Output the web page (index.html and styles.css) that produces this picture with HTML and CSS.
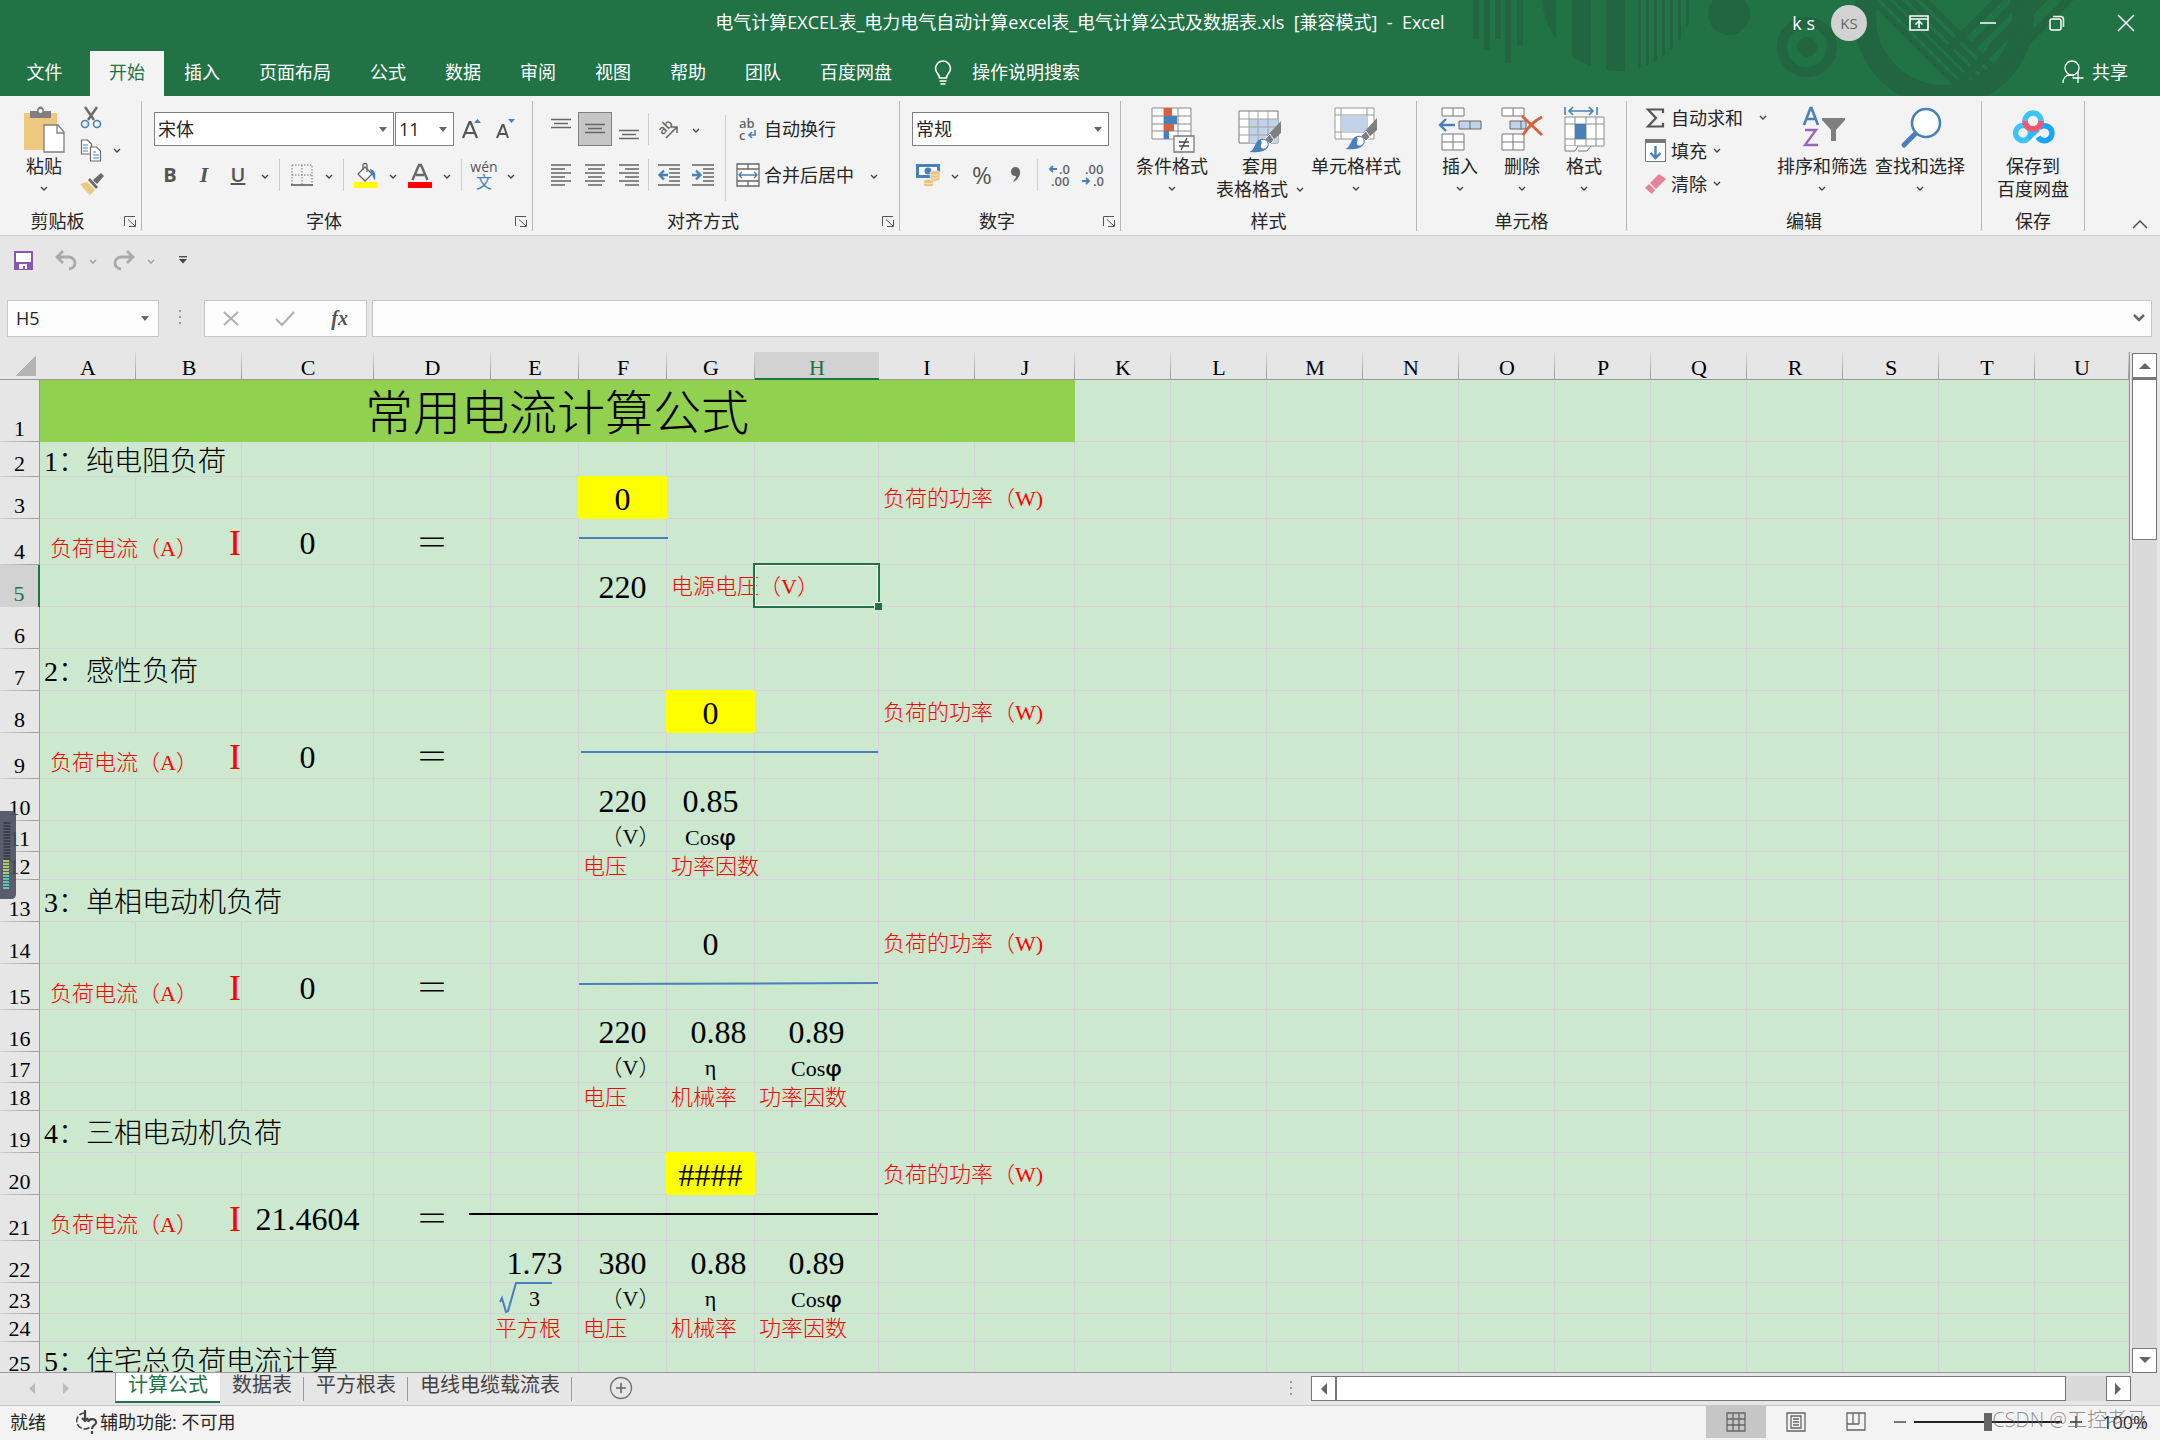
FILE: index.html
```html
<!DOCTYPE html>
<html lang="zh-CN">
<head>
<meta charset="utf-8">
<title>电气计算EXCEL表 - Excel</title>
<link rel="stylesheet" href="styles.css">
</head>
<body>
<svg class="defs" aria-hidden="true">
  <symbol id="chev" viewBox="0 0 8 6"><path d="M1 1l3 3 3-3" fill="none" stroke="#444" stroke-width="1.4"/></symbol>
  <symbol id="launch" viewBox="0 0 12 11"><path d="M.5 10V.5H11M11.500 4v6.500H5M4 3.500l7 6.500" fill="none" stroke="#555"/></symbol>
  <symbol id="brush" viewBox="0 0 44 46"><path d="M43 14v12L34 34l-5-5z" fill="#7f7f7f"/><path d="M32 27l4 6-4 4-5-5z" fill="#7f7f7f" stroke="#f3f3f3"/><path d="M11 45c6-1 5-11 12-13 5-1 9 4 7 8-3 5-12 6-19 5z" fill="#4a80ba"/><path d="M22 33c5-2 9 1 8 6-2 3-5 4-7 2-2-3 2-5-1-8z" fill="#fff" stroke="#4a80ba"/></symbol>
</svg>

<header class="top">
  <svg class="pattern" viewBox="0 0 700 96" width="700" height="96" aria-hidden="true">
    <defs>
      <clipPath id="disc"><circle cx="158" cy="-5" r="76"/></clipPath>
      <clipPath id="hole"><circle cx="484" cy="17" r="68"/></clipPath>
    </defs>
    <g fill="#226541">
      <path d="M13 0h6v39h-6zM24 0h6v50h-6zM35 0h6v39h-6zM45 0h6v63h-6zM57 0h6v46h-6z"/>
      <path clip-path="url(#disc)" d="M80 0h16v80H80zM112 0h19v80h-19zM146 0h19v80h-19zM178 0h3v80h-3zM186 0h3v80h-3zM194 0h3v80h-3zM202 0h3v80h-3zM210 0h3v80h-3zM218 0h3v80h-3zM226 0h3v80h-3z"/>
      <circle cx="269" cy="14" r="21"/><circle cx="347" cy="47" r="10"/>
    </g>
    <g fill="none" stroke="#226541">
      <circle cx="347" cy="47" r="25" stroke-width="10"/>
      <circle cx="484" cy="17" r="79" stroke-width="22"/>
      <path clip-path="url(#hole)" stroke-width="6" d="M400-12l120 120M413-12l120 120M426-12l120 120M439-12l120 120M453-12l120 120"/>
      <path stroke-width="8" d="M489 49l60-60M510 49l60-60M530 49l60-60M498 84l100-100M528 80l95-95"/>
    </g>
  </svg>
  <div class="titlebar">
    <h1 class="title">电气计算EXCEL表_电力电气自动计算excel表_电气计算公式及数据表.xls  [兼容模式]  -  Excel</h1>
    <div class="window">
      <span class="user">k s</span><span class="avatar">KS</span>
      <button class="win" aria-label="功能区显示选项"><svg width="20" height="16" viewBox="0 0 20 16"><path d="M1 1h18v14H1zM1 4h18M10 13V7M6.500 9.500L10 6l3.500 3.500" fill="none" stroke="#fff" stroke-width="1.600"/></svg></button>
      <button class="win" aria-label="最小化"><svg width="16" height="16"><path d="M0 8h16" stroke="#fff" stroke-width="1.500"/></svg></button>
      <button class="win" aria-label="还原"><svg width="16" height="16" viewBox="0 0 16 16"><rect x="1" y="4" width="11" height="11" rx="2" fill="none" stroke="#fff" stroke-width="1.500"/><path d="M4 1.500h7.500a3 3 0 0 1 3 3V12" fill="none" stroke="#fff" stroke-width="1.500"/></svg></button>
      <button class="win" aria-label="关闭"><svg width="16" height="16"><path d="M0 0l16 16M16 0L0 16" stroke="#fff" stroke-width="1.500"/></svg></button>
    </div>
  </div>
  <nav class="tabs">
    <button class="tab file">文件</button>
    <button class="tab active">开始</button>
    <button class="tab">插入</button>
    <button class="tab">页面布局</button>
    <button class="tab">公式</button>
    <button class="tab">数据</button>
    <button class="tab">审阅</button>
    <button class="tab">视图</button>
    <button class="tab">帮助</button>
    <button class="tab">团队</button>
    <button class="tab">百度网盘</button>
    <button class="tell"><svg width="18" height="25" viewBox="0 0 18 25"><path d="M5.500 18c0-4-4-5-4-9.500a7.500 7.500 0 0 1 15 0c0 4.500-4 5.500-4 9.500zM5.500 21h7M6.500 24h5" fill="none" stroke="#fff" stroke-width="1.600"/></svg>操作说明搜索</button>
    <button class="share"><svg width="22" height="24" viewBox="0 0 22 24"><circle cx="10" cy="8" r="7" fill="none" stroke="#fff" stroke-width="1.300"/><path d="M1 23c0-5 3-8 7-8 2 0 3 .4 4 1M16 12v11M10.500 18h11" fill="none" stroke="#fff" stroke-width="1.300"/></svg>共享</button>
  </nav>
</header>

<section class="ribbon">
  <div class="group g-clip">
    <div class="body">
      <button class="big paste"><span class="pic"><svg width="42" height="46" viewBox="0 0 42 46"><path d="M1 6h33v37H1z" fill="#edc87e"/><path d="M7 4h7c0-6 7-6 7 0h7v7H7z" fill="#7f7f7f"/><circle cx="17.500" cy="4" r="2" fill="#f3f3f3"/><path d="M21 18h14l6 7v20H21z" fill="#fff" stroke="#7f7f7f" stroke-width="1.300"/><path d="M34 18v8h7" fill="none" stroke="#7f7f7f" stroke-width="1.300"/></svg></span><span>粘贴</span><svg class="chev"><use href="#chev"/></svg></button>
      <div class="stack">
        <button class="line" aria-label="剪切"><svg width="22" height="22" viewBox="0 0 22 22"><path d="M5 0l9 13M17 0L8 13" stroke="#6b6b6b" stroke-width="2.400"/><circle cx="5" cy="17" r="3.500" fill="none" stroke="#4a80ba" stroke-width="1.600"/><circle cx="17" cy="17" r="3.500" fill="none" stroke="#4a80ba" stroke-width="1.600"/></svg></button>
        <button class="line" aria-label="复制"><svg width="22" height="23" viewBox="0 0 22 23"><path d="M1.500 1h6l4 4v10h-10z" fill="#fff" stroke="#6b6b6b" stroke-width="1.200"/><path d="M10.500 8h6l4 4v10h-10z" fill="#fff" stroke="#6b6b6b" stroke-width="1.200"/><path d="M3 6h5M3 9h5M3 12h5M13 13h3M13 16h6M13 19h6" stroke="#4a80ba" stroke-width="1.200"/></svg><svg class="chev"><use href="#chev"/></svg></button>
        <button class="line" aria-label="格式刷"><svg width="24" height="22" viewBox="0 0 24 22"><path d="M13 7l8-7 3 3-7 8z" fill="#6b6b6b"/><path d="M10 5l8 9-2 2-8-9z" fill="#6b6b6b"/><path d="M7 9l8 8-5 5C7 20 3 14 0 11z" fill="#edc87e"/></svg></button>
      </div>
    </div>
    <div class="label"><span>剪贴板</span><svg class="launch"><use href="#launch"/></svg></div>
  </div>

  <div class="group g-font">
    <div class="body rows">
      <div class="row">
        <span class="combo fontname"><select aria-label="字体"><option>宋体</option></select></span>
        <span class="combo fontsize"><select aria-label="字号"><option>11</option></select></span>
        <button class="tool" aria-label="增大字号"><svg width="20" height="22" viewBox="0 0 20 22"><path d="M1 20L7.500 4h1L15 20M4 15h8" fill="none" stroke="#555" stroke-width="2.200"/><path d="M12 5l3.500-4L19 5z" fill="#4a80ba"/></svg></button>
        <button class="tool" aria-label="减小字号"><svg width="20" height="22" viewBox="0 0 20 22"><path d="M1 20L6.500 7h1L12 20M3 16h8" fill="none" stroke="#555" stroke-width="2"/><path d="M12 1l3.500 4L19 1z" fill="#4a80ba"/></svg></button>
      </div>
      <div class="row">
        <button class="tool b">B</button><button class="tool i">I</button><button class="tool u">U</button><button class="drop" aria-label="下划线选项"><svg class="chev"><use href="#chev"/></svg></button><i class="sep"></i>
        <button class="tool" aria-label="边框"><svg width="22" height="22" viewBox="0 0 22 22"><path d="M1 1h20v20M1 1v20M11 1v20M1 11h20" fill="none" stroke="#777" stroke-dasharray="1.500 1.500"/><path d="M0 21h22" stroke="#555" stroke-width="1.500"/></svg></button><button class="drop" aria-label="边框选项"><svg class="chev"><use href="#chev"/></svg></button><i class="sep"></i>
        <button class="tool" aria-label="填充颜色"><svg width="24" height="25" viewBox="0 0 24 25"><path d="M11 4l7 7-7 7-7-7z" fill="#fff" stroke="#666" stroke-width="1.300"/><path d="M9 7V2c0-2 4-2 4 0v7" fill="none" stroke="#666" stroke-width="1.300"/><path d="M16 6c5 1 6 5 5 11-2-1-2-5-4-7z" fill="#4a80ba"/><path d="M0 19h24v6H0z" fill="#ff0"/></svg></button><button class="drop" aria-label="填充颜色选项"><svg class="chev"><use href="#chev"/></svg></button>
        <button class="tool" aria-label="字体颜色"><svg width="24" height="25" viewBox="0 0 24 25"><path d="M4.500 17L11 2h2l6.500 15M8 12h8" fill="none" stroke="#666" stroke-width="2.400"/><path d="M0 19h24v6H0z" fill="#f00"/></svg></button><button class="drop" aria-label="字体颜色选项"><svg class="chev"><use href="#chev"/></svg></button><i class="sep"></i>
        <button class="tool wen"><span>wén</span><b>文</b></button><button class="drop" aria-label="拼音选项"><svg class="chev"><use href="#chev"/></svg></button>
      </div>
    </div>
    <div class="label"><span>字体</span><svg class="launch"><use href="#launch"/></svg></div>
  </div>

  <div class="group g-align">
    <div class="body">
      <div class="rows">
        <div class="row">
          <button class="tool" aria-label="顶端对齐"><svg width="20" height="22"><path d="M0 1.500h20M3 5.500h14M0 9.500h20" stroke="#666" stroke-width="1.300"/></svg></button><button class="tool on" aria-label="垂直居中"><svg width="20" height="22"><path d="M0 6.500h20M3 10.500h14M0 14.500h20" stroke="#666" stroke-width="1.300"/></svg></button><button class="tool" aria-label="底端对齐"><svg width="20" height="22"><path d="M0 12.500h20M3 16.500h14M0 20.500h20" stroke="#666" stroke-width="1.300"/></svg></button><i class="sep thin"></i>
          <button class="tool" aria-label="方向"><svg width="22" height="22" viewBox="0 0 22 22"><g transform="rotate(-45 9 9)"><text x="0" y="12" class="glyph">ab</text></g><path d="M8 20L19 9M13 9h6v6" fill="none" stroke="#666" stroke-width="1.500"/></svg></button><button class="drop" aria-label="方向选项"><svg class="chev"><use href="#chev"/></svg></button>
        </div>
        <div class="row">
          <button class="tool" aria-label="左对齐"><svg width="20" height="22"><path d="M0 1h20M0 5h14M0 9h20M0 13h14M0 17h20M0 21h14" stroke="#666" stroke-width="1.300"/></svg></button><button class="tool" aria-label="居中"><svg width="20" height="22"><path d="M0 1h20M3 5h14M0 9h20M3 13h14M0 17h20M3 21h14" stroke="#666" stroke-width="1.300"/></svg></button><button class="tool" aria-label="右对齐"><svg width="20" height="22"><path d="M0 1h20M6 5h14M0 9h20M6 13h14M0 17h20M6 21h14" stroke="#666" stroke-width="1.300"/></svg></button><i class="sep thin"></i>
          <button class="tool" aria-label="减少缩进量"><svg width="22" height="22"><path d="M0 1h22M11 5h11M11 9h11M11 13h11M11 17h11M0 21h22" stroke="#666" stroke-width="1.300"/><path d="M10 11H2M6 6.500L1.500 11 6 15.500" fill="none" stroke="#4a80ba" stroke-width="2.400"/></svg></button><button class="tool" aria-label="增加缩进量"><svg width="22" height="22"><path d="M0 1h22M11 5h11M11 9h11M11 13h11M11 17h11M0 21h22" stroke="#666" stroke-width="1.300"/><path d="M0 11h8M4 6.500L8.500 11 4 15.500" fill="none" stroke="#4a80ba" stroke-width="2.400"/></svg></button>
        </div>
      </div>
      <i class="longsep"></i>
      <div class="rows">
        <div class="row"><button class="wide"><span class="ico"><svg width="18" height="24" viewBox="0 0 18 24"><text x="0" y="11" class="glyph">ab</text><text x="0" y="23" class="glyph">c</text><path d="M16 13v5h-6M13 15l-3 3 3 3" fill="none" stroke="#4a80ba" stroke-width="1.600"/></svg></span>自动换行</button></div>
        <div class="row"><button class="wide"><span class="ico"><svg width="24" height="24" viewBox="0 0 24 24"><path d="M1 1h22v22H1zM1 6h22M1 18h22M12 1v5M12 18v5" fill="#fff" stroke="#666" stroke-width="1.300"/><path d="M3 12h18M6 9l-3 3 3 3M18 9l3 3-3 3" fill="none" stroke="#4a80ba" stroke-width="1.400"/></svg></span>合并后居中</button><button class="drop far" aria-label="合并选项"><svg class="chev"><use href="#chev"/></svg></button></div>
      </div>
    </div>
    <div class="label"><span>对齐方式</span><svg class="launch"><use href="#launch"/></svg></div>
  </div>

  <div class="group g-num">
    <div class="body rows">
      <div class="row"><span class="combo format"><select aria-label="数字格式"><option>常规</option></select></span></div>
      <div class="row">
        <button class="tool" aria-label="会计数字格式"><svg width="24" height="24" viewBox="0 0 24 24"><path d="M1.500 2.500h21v11h-21z" fill="#fff" stroke="#4a80ba" stroke-width="3"/><circle cx="12" cy="8" r="3.500" fill="#4a80ba"/><g fill="#edc27a" stroke="#f3f3f3" stroke-width=".8"><ellipse cx="19" cy="16" rx="5" ry="2.200"/><ellipse cx="19" cy="13" rx="5" ry="2.200"/><ellipse cx="19" cy="10" rx="5" ry="2.200"/><ellipse cx="12.500" cy="21.500" rx="5" ry="2.200"/><ellipse cx="12.500" cy="18.500" rx="5" ry="2.200"/></g></svg></button><button class="drop" aria-label="货币选项"><svg class="chev"><use href="#chev"/></svg></button>
        <button class="tool pct">%</button><button class="tool" aria-label="千位分隔样式"><svg width="10" height="18" viewBox="0 0 10 18"><path d="M4.500 1C8 1 9.500 4 9 8c-1 4-4 7-7 8 1-2 3-4 3-6C1 10 0 8 0 5.500 0 3 2 1 4.500 1z" fill="#666"/></svg></button><i class="sep"></i>
        <button class="tool" aria-label="增加小数位数"><svg width="24" height="24" viewBox="0 0 24 24"><text x="11" y="11" class="glyph">.0</text><text x="3" y="23" class="glyph">.00</text><path d="M9 6H2M5 3L2 6l3 3" fill="none" stroke="#4a80ba" stroke-width="1.800"/></svg></button><button class="tool" aria-label="减少小数位数"><svg width="24" height="24" viewBox="0 0 24 24"><text x="3" y="11" class="glyph">.00</text><text x="11" y="23" class="glyph">.0</text><path d="M0 18h7M4 15l3 3-3 3" fill="none" stroke="#4a80ba" stroke-width="1.800"/></svg></button>
      </div>
    </div>
    <div class="label"><span>数字</span><svg class="launch"><use href="#launch"/></svg></div>
  </div>

  <div class="group g-style">
    <div class="body">
      <button class="big cond"><span class="pic"><svg width="42" height="46" viewBox="0 0 42 46"><path d="M1 1h39v31H1zM1 9h39M1 17h39M1 24h39M13 1v31M27 1v31" fill="#fff" stroke="#8a8a8a"/><path d="M13 1h8v8h-8zM13 17h10v7H13z" fill="#d8603f"/><path d="M13 9h13v8H13zM13 24h5v8h-5z" fill="#4a80ba"/><path d="M23 29h20v16H23z" fill="#fff" stroke="#777" stroke-width="1.300"/><path d="M28 35h10M28 39h10M36 31l-6 12" stroke="#444" stroke-width="1.300"/></svg></span><span>条件格式</span><svg class="chev"><use href="#chev"/></svg></button>
      <button class="big tablefmt"><span class="pic"><svg width="44" height="46" viewBox="0 0 44 46"><path d="M1 4h39v32H1z" fill="#fff" stroke="#777"/><path d="M11 12h29v24H11z" fill="#c0d3e9"/><path d="M1 12h39M1 20h39M1 28h39M11 4v32M20 4v32M30 4v32" stroke="#a3a3a3"/><use href="#brush" width="44" height="46"/></svg></span><span>套用</span><span>表格格式<svg class="chev inline"><use href="#chev"/></svg></span></button>
      <button class="big cellstyle"><span class="pic"><svg width="44" height="46" viewBox="0 0 44 46"><path d="M1 1h39v31H1zM1 8h39M1 25h39M7 1v31M33 1v31" fill="#fff" stroke="#999"/><path d="M8 9h25v16H8z" fill="#c0d3e9"/><use href="#brush" y="-3" width="44" height="46"/></svg></span><span>单元格样式</span><svg class="chev"><use href="#chev"/></svg></button>
    </div>
    <div class="label"><span>样式</span></div>
  </div>

  <div class="group g-cells">
    <div class="body">
      <button class="big cell"><span class="pic"><svg width="44" height="46" viewBox="0 0 44 46"><path d="M4 1h22v8H4zM15 1v8M4 27h22v16H4zM15 27v16M4 35h22" fill="#fff" stroke="#777"/><path d="M21 14h22v8H21zM32 14v8" fill="#c0d3e9" stroke="#666"/><path d="M17 18H2M8 12l-6 6 6 6" fill="none" stroke="#4a80ba" stroke-width="2.400"/></svg></span><span>插入</span><svg class="chev"><use href="#chev"/></svg></button>
      <button class="big cell"><span class="pic"><svg width="44" height="46" viewBox="0 0 44 46"><path d="M2 1h22v8H2zM13 1v8M2 27h22v16H2zM13 27v16M2 35h22" fill="#fff" stroke="#777"/><path d="M10 14h16v8H10zM21 14v8" fill="#c0d3e9" stroke="#666"/><path d="M22 9l20 19M42 10c-8 4-14 10-19 18" fill="none" stroke="#d8603f" stroke-width="2.800"/></svg></span><span>删除</span><svg class="chev"><use href="#chev"/></svg></button>
      <button class="big cell"><span class="pic"><svg width="42" height="46" viewBox="0 0 42 46"><path d="M2 10h39v29H2zM2 17h39M2 32h39M12 10v29M23 10v29M33 10v29" fill="#fff" stroke="#8a8a8a"/><path d="M12 17h11v15H12z" fill="#4a80ba"/><path d="M2 39v5h10l3-5M15 44h9l4-5" fill="#fff" stroke="#777"/><path d="M2 0v8M34 0v8M6 4h24M10 0L6 4l4 4M26 0l4 4-4 4" fill="none" stroke="#4a80ba" stroke-width="1.600"/></svg></span><span>格式</span><svg class="chev"><use href="#chev"/></svg></button>
    </div>
    <div class="label"><span>单元格</span></div>
  </div>

  <div class="group g-edit">
    <div class="body">
      <div class="stack">
        <button class="line"><span class="ico"><svg width="18" height="20" viewBox="0 0 18 20"><path d="M17 5V1.500H2L10 10l-8 8.500h15V15" fill="none" stroke="#555" stroke-width="2.200"/></svg></span>自动求和<svg class="chev far"><use href="#chev"/></svg></button>
        <button class="line"><span class="ico"><svg width="21" height="23" viewBox="0 0 21 23"><path d="M.5.500h20v22H.5z" fill="#fff" stroke="#777"/><path d="M0 0h21v4H0z" fill="#777"/><path d="M10.500 7v12M5.500 14l5 5 5-5" fill="none" stroke="#4a80ba" stroke-width="2.400"/></svg></span>填充<svg class="chev"><use href="#chev"/></svg></button>
        <button class="line"><span class="ico"><svg width="21" height="20" viewBox="0 0 21 20"><path d="M14 0l7 5-10 10-6-6z" fill="#e8829a"/><path d="M4 10l6 6-3 4-7-6z" fill="#e8829a"/></svg></span>清除<svg class="chev"><use href="#chev"/></svg></button>
      </div>
      <button class="big edit"><span class="pic"><svg width="44" height="46" viewBox="0 0 44 46"><path d="M4 18L10.500 1h1L18 18M6 12h10" fill="none" stroke="#4a80ba" stroke-width="2.600"/><path d="M5 23h11L5 38h13" fill="none" stroke="#9568b8" stroke-width="2.400"/><path d="M22 11h23v2L36 23v11h-5V23l-9-10z" fill="#7f7f7f"/></svg></span><span>排序和筛选</span><svg class="chev"><use href="#chev"/></svg></button>
      <button class="big edit"><span class="pic"><svg width="42" height="46" viewBox="0 0 42 46"><path d="M16 27L5 38" stroke="#4a80ba" stroke-width="5" stroke-linecap="round"/><circle cx="27" cy="16" r="14" fill="#fff" stroke="#4a80ba" stroke-width="2.600"/></svg></span><span>查找和选择</span><svg class="chev"><use href="#chev"/></svg></button>
    </div>
    <div class="label"><span>编辑</span></div>
  </div>

  <div class="group g-save">
    <div class="body">
      <button class="big save"><span class="pic"><svg width="40" height="46" viewBox="0 0 40 46"><g fill="none" stroke-width="5.500"><circle cx="10" cy="26" r="7.500" stroke="#3cc3f7"/><path d="M26 21a7.500 7.500 0 1 1-1 9" stroke="#16a5fb"/><path d="M15 31l10-9" stroke="#2db8f8"/><circle cx="20" cy="14" r="8" stroke="#3cc3f7"/><path d="M12 14a8 8 0 0 0 16 0" stroke="#f9546d"/></g></svg></span><span>保存到</span><span>百度网盘</span></button>
    </div>
    <div class="label"><span>保存</span></div>
  </div>
  <button class="collapse" aria-label="折叠功能区"><svg width="16" height="10"><path d="M1 9l7-7 7 7" fill="none" stroke="#444" stroke-width="1.400"/></svg></button>
</section>

<div class="quick">
  <button class="tool" aria-label="保存"><svg width="19" height="19" viewBox="0 0 19 19"><path d="M1 1h17v17H1z" fill="#fff" stroke="#8a57b0" stroke-width="2"/><path d="M1 11h17v7H1z" fill="#8a57b0"/><path d="M5 13h8v5h-2v-3H9v3H5z" fill="#fff"/></svg></button>
  <button class="tool undo" aria-label="撤消"><svg width="22" height="20" viewBox="0 0 22 20"><path d="M8 1L2 7l6 6M2 7h12c8 1 8 11 0 12" fill="none" stroke="#aaa" stroke-width="2.800"/></svg></button>
  <button class="drop" aria-label="撤消列表"><svg class="chev pale"><use href="#chev"/></svg></button>
  <button class="tool" aria-label="恢复"><svg width="22" height="20" viewBox="0 0 22 20"><path d="M14 1l6 6-6 6M20 7H8C0 8 0 18 8 19" fill="none" stroke="#aaa" stroke-width="2.800"/></svg></button>
  <button class="drop" aria-label="恢复列表"><svg class="chev pale"><use href="#chev"/></svg></button>
  <button class="tool more" aria-label="自定义快速访问工具栏"><svg width="8" height="8"><path d="M0 .7h8" stroke="#444" stroke-width="1.300"/><path d="M0 3h8L4 7.500z" fill="#444"/></svg></button>
</div>

<div class="formula">
  <span class="combo name"><input aria-label="名称框" value="H5"></span>
  <svg class="dots" width="3" height="16"><path d="M0 1h2M0 7h2M0 13h2" stroke="#999" stroke-width="2"/></svg>
  <div class="fxbox">
    <button aria-label="取消"><svg width="16" height="15"><path d="M1 1l14 13M15 1L1 14" stroke="#b0b0b0" stroke-width="2"/></svg></button>
    <button aria-label="输入"><svg width="20" height="15"><path d="M1 8l6 6L19 1" fill="none" stroke="#b0b0b0" stroke-width="2.200"/></svg></button>
    <button class="fx">fx</button>
  </div>
  <div class="entry"><input aria-label="编辑栏"><svg width="12" height="9"><path d="M1 1l5 5 5-5" fill="none" stroke="#666" stroke-width="2.600"/></svg></div>
</div>

<main class="work">
  <div class="sheet">
    <table class="grid" id="grid"></table>
    <svg class="shapes" width="1100" height="1022" aria-hidden="true">
      <g fill="none" stroke="#4a80ba" stroke-width="2">
        <path d="M579 186h89M581 400h297M579 632l299-1"/>
        <path d="M500 950l2-4 4 14 2-1 8-28h36"/>
      </g>
      <path d="M469 862h409" stroke="#000" stroke-width="2"/>
    </svg>
  </div>
  <div class="vscroll">
    <button aria-label="向上滚动"><svg width="12" height="7"><path d="M0 7l6-6 6 6z" fill="#666"/></svg></button>
    <div class="vthumb"></div>
    <div class="fill"></div>
    <button aria-label="向下滚动"><svg width="12" height="7"><path d="M0 0l6 6 6-6z" fill="#666"/></svg></button>
  </div>
</main>

<div class="sheetbar">
  <div class="arrows"><svg width="6" height="11"><path d="M6 0v11L0 5.500z" fill="#bbb"/></svg><svg width="6" height="11"><path d="M0 0v11l6-5.500z" fill="#bbb"/></svg></div>
  <button class="stab current">计算公式</button>
  <button class="stab">数据表</button>
  <button class="stab">平方根表</button>
  <button class="stab">电线电缆载流表</button>
  <button class="add" aria-label="新工作表"><svg width="24" height="24"><circle cx="12" cy="12" r="10.500" fill="none" stroke="#777" stroke-width="1.300"/><path d="M12 7v10M7 12h10" stroke="#666" stroke-width="1.600"/></svg></button>
  <svg class="dots" width="3" height="16"><path d="M0 1h2M0 7h2M0 13h2" stroke="#999" stroke-width="2"/></svg>
  <div class="hscroll">
    <button aria-label="向左滚动"><svg width="7" height="12"><path d="M7 0v12L1 6z" fill="#666"/></svg></button>
    <div class="hthumb"></div>
    <div class="hrest"></div>
    <button aria-label="向右滚动"><svg width="7" height="12"><path d="M0 0v12l6-6z" fill="#666"/></svg></button>
  </div>
</div>

<footer class="status">
  <span>就绪</span>
  <span class="access"><svg width="23" height="24" viewBox="0 0 23 24"><path d="M9 3a8 8 0 1 0 5 14" fill="none" stroke="#444" stroke-width="1.600" stroke-dasharray="6 2"/><path d="M9 0v10M6 8l3 3 3-3M12 12c1-4 9-4 8 1-1 3-4 2-4 6M16 21v3" fill="none" stroke="#444" stroke-width="2.200"/></svg>辅助功能: 不可用</span>
  <div class="views">
    <button class="on" aria-label="普通"><svg width="20" height="20"><path d="M1 1h18v18H1zM1 7h18M1 13h18M7 1v18M13 1v18" fill="none" stroke="#666" stroke-width="1.300"/></svg></button>
    <button aria-label="页面布局"><svg width="20" height="20"><path d="M1 1h18v18H1zM5 4h10v12H5zM7 7h6M7 10h6M7 13h6" fill="none" stroke="#666" stroke-width="1.300"/></svg></button>
    <button aria-label="分页预览"><svg width="20" height="20"><path d="M1 1h18v17H1zM7 1v11M13 1v11M1 12h12" fill="none" stroke="#666" stroke-width="1.300"/></svg></button>
  </div>
  <button class="zoom" aria-label="缩小"><svg width="12" height="12"><path d="M0 6h12" stroke="#333" stroke-width="1.300"/></svg></button>
  <input class="range" type="range" min="0" max="100" value="50" aria-label="缩放">
  <button class="zoom" aria-label="放大"><svg width="12" height="12"><path d="M0 6h12M6 0v12" stroke="#333" stroke-width="1.300"/></svg></button>
  <span class="percent">100%</span>
  <span class="mark">CSDN @工控老马</span>
</footer>

<svg class="meter" width="17" height="88" aria-hidden="true">
  <path d="M0 0h11q5 0 5 5v78q0 5-5 5H0z" fill="#4b4f60"/>
  <path d="M7 11v38" stroke="#2c2e3a" stroke-width="7" stroke-dasharray="2 1"/>
  <path d="M6 49v14" stroke="#a9c65c" stroke-width="6" stroke-dasharray="2 1"/>
  <path d="M6 64v15" stroke="#4fc3a5" stroke-width="6" stroke-dasharray="2 1"/>
</svg>
<script src="sheet.js"></script>
</body>
</html>
```

FILE: styles.css
```css
* { box-sizing: border-box; }
body {
  margin: 0;
  height: 100vh;
  display: flex;
  flex-direction: column;
  overflow: hidden;
  position: relative;
  background: #e6e6e6;
  color: #262626;
  font: 18px/24px "Open Sans", "Noto Sans CJK SC", sans-serif;
}
button, input, select { font: inherit; color: inherit; }
button { border: 0; background: none; padding: 0; white-space: nowrap; }
svg { display: block; flex: none; overflow: visible; }
.defs { position: absolute; width: 0; height: 0; }

/* title bar and tabs */
.top { position: relative; background: #217346; color: #fff; }
.pattern { position: absolute; right: 0; top: 0; overflow: hidden; }
.titlebar {
  position: relative;
  display: grid;
  grid-template-columns: 1fr auto 1fr;
  align-items: center;
  height: 46px;
}
.title { grid-column: 2; margin: 0; padding-bottom: 2px; font-size: 18px; font-weight: 400; white-space: pre; }
.window { display: flex; justify-content: flex-end; align-items: center; }
.avatar {
  width: 36px; height: 36px;
  margin: 0 17px 0 16px;
  border-radius: 50%;
  background: #d2d2d2;
  color: #666;
  font-size: 15px;
  line-height: 36px;
  text-align: center;
}
.win { width: 69px; height: 46px; display: grid; place-items: center; }
.tabs { position: relative; display: flex; gap: 1px; height: 50px; padding-top: 5px; }
.tab { padding: 0 19px 3px; }
.tab.file { width: 89px; padding: 0 26px 3px; }
.tab.active { background: #f3f3f3; color: #217346; }
.tell { display: flex; align-items: center; gap: 20px; margin-left: 22px; padding-bottom: 3px; }
.share { display: flex; align-items: center; gap: 8px; margin-left: auto; margin-right: 32px; padding-bottom: 3px; }

/* ribbon */
.ribbon { display: flex; height: 140px; padding-top: 5px; background: #f3f3f3; border-bottom: 1px solid #d0d0d0; }
.group { display: flex; flex-direction: column; height: 130px; border-right: 1px solid #b8b8b8; flex: none; }
.g-clip { width: 142px; }
.g-font { width: 391px; }
.g-align { width: 367px; }
.g-num { width: 221px; }
.g-style { width: 296px; }
.g-cells { width: 210px; }
.g-edit { width: 355px; }
.g-save { width: 103px; }
.body { flex: 1; display: flex; }
.g-clip .body { padding-left: 8px; }
.g-font .body, .g-align .body, .g-num .body { padding-left: 11px; }
.g-style .body { padding-left: 9px; }
.g-cells .body { padding-left: 12px; }
.g-edit .body { padding-left: 16px; }
.g-save .body { justify-content: center; }
.label { display: flex; align-items: center; height: 20px; line-height: 20px; }
.label span { flex: 1; text-align: center; }
.launch { width: 12px; height: 11px; margin: 0 5px 0 9px; }
.rows { display: flex; flex-direction: column; gap: 12px; padding-top: 11px; }
.row { display: flex; align-items: center; height: 34px; }
.big { display: flex; flex-direction: column; align-items: center; padding-top: 6px; line-height: 23px; }
.big .pic { height: 46px; margin-bottom: 2px; }
.paste { width: 72px; }
.cond { width: 84px; }
.tablefmt { width: 92px; }
.cellstyle { width: 100px; }
.cell { width: 62px; }
.edit { width: 98px; }
.chev { width: 8px; height: 6px; margin: 0 6px; }
.big > .chev { margin-top: 8px; }
.chev.inline { display: inline-block; margin: 0 0 2px 8px; vertical-align: middle; }
.pale { opacity: .45; }
.stack { display: flex; flex-direction: column; }
.g-edit .stack { width: 130px; }
.line { display: flex; align-items: center; height: 33px; }
.g-clip .line .chev { margin-left: 11px; }
.ico { width: 24px; margin-right: 4px; display: grid; place-items: center; }
.chev.far { margin-left: 16px; }
.drop.far { margin-left: 10px; }
.tool { width: 34px; height: 34px; display: grid; place-items: center; color: #555; }
.tool.on { background: #c6c6c6; border: 1px solid #808080; }
.drop { width: 20px; height: 34px; display: grid; place-items: center; }
.drop .chev { margin: 4px 0 0; }
.b { font-weight: 700; font-size: 20px; }
.i { font: italic 700 22px "Liberation Serif", serif; }
.u { font-size: 20px; font-weight: 600; text-decoration: underline; }
.pct { font-size: 24px; }
.sep { width: 2px; height: 32px; margin: 0 4px; border-left: 1px solid #d0d0d0; }
.sep.thin { margin: 0 2px; }
.longsep { width: 1px; height: 86px; margin: 14px 10px 0 0; background: #d0d0d0; }
.g-align .rows:first-child { width: 181px; flex: none; }
.wide { display: flex; align-items: center; }
.glyph { font: 600 13px/12px "Open Sans", sans-serif; fill: #666; }
.wen { align-content: center; line-height: 14px; font-size: 14px; }
.wen b { font-weight: 400; font-size: 16px; line-height: 16px; color: #4a80ba; }
.combo { display: grid; align-items: center; }
.combo > * { grid-area: 1 / 1; }
.combo::after {
  content: "";
  grid-area: 1 / 1;
  justify-self: end;
  margin-right: 7px;
  border: 4px solid transparent;
  border-top: 5px solid #666;
  border-bottom: 0;
}
.combo select { appearance: none; width: 100%; height: 34px; border: 1px solid #808080; border-radius: 0; background: #fff; padding: 0 3px; }
.fontname { width: 240px; margin-left: 1px; }
.fontsize { width: 59px; margin: 0 1px; }
.format { width: 197px; margin-left: 1px; }
.collapse { margin: auto 12px 6px auto; }

/* quick access and formula bar */
.quick { display: flex; align-items: center; height: 50px; padding: 0 0 2px 6px; flex: none; }
.undo { margin-left: 9px; }
.quick .drop + .tool { margin-left: 4px; }
.quick .drop + .more { margin-left: 5px; }
.formula { display: flex; align-items: center; height: 66px; padding: 0 8px 2px 7px; flex: none; }
.name { width: 152px; margin-right: 20px; }
.name input, .fxbox, .entry { height: 37px; border: 1px solid #c6c6c6; background: #fdfdfd; }
.name input { width: 100%; padding: 0 8px; }
.name::after { margin-right: 10px; }
.fxbox { display: flex; justify-content: space-around; align-items: center; width: 163px; margin: 0 5px 0 22px; }
.fx { font: italic 700 20px "Liberation Serif", serif; color: #555; }
.entry { flex: 1; display: flex; align-items: center; padding-right: 6px; }
.entry input { flex: 1; border: 0; background: none; }

/* worksheet */
.work { flex: 1; display: flex; min-height: 0; }
.sheet { flex: 1; position: relative; overflow: hidden; border-right: 1px solid #999; border-bottom: 1px solid #999; background: #cce8cf; }
.grid {
  width: 100%;
  table-layout: fixed;
  border-collapse: separate;
  border-spacing: 0;
  color: #000;
  font: 22px/22px "Liberation Serif", "Noto Sans CJK SC", serif;
}
.grid td, .grid th { padding: 0; white-space: nowrap; }
.grid td { border-right: 1px solid #d5d2d8; border-bottom: 1px solid #d5d2d8; padding-top: 2px; text-align: center; vertical-align: middle; font-weight: 300; }
.grid th { font-weight: 400; vertical-align: bottom; background: linear-gradient(#d8d8d8, #9c9c9c) right / 1px 100% no-repeat #e6e6e6; }
.grid thead th { height: 28px; border-bottom: 1px solid #999; }
.grid tbody th { padding-bottom: 2px; border-right: 1px solid #999; background: linear-gradient(90deg, #d0d0d0, #9c9c9c) bottom / 100% 1px no-repeat #e6e6e6; }
.grid thead th.sel { background: #d2d2d2; color: #217346; border-bottom: 2px solid #217346; line-height: 21px; }
.grid tbody th.sel { background: #d2d2d2; color: #217346; border-right: 2px solid #217346; }
.grid .corner { background: linear-gradient(135deg, transparent 50%, #b4b4b4 50%) 16px 4px / 20px 20px no-repeat #e6e6e6; }
.grid .open { border-right-color: transparent; }
.grid .head { text-align: left; padding: 5px 0 0 4px; font-size: 28px; line-height: 28px; }
.grid .note { text-align: left; padding-left: 4px; color: #f00; }
.grid .amp { text-align: left; padding: 0 0 4px 10px; color: #f00; vertical-align: bottom; }
.grid .cur { text-align: right; font-size: 36px; line-height: 36px; color: #f00; }
.grid .num { font-size: 32px; line-height: 32px; }
.grid .shift { padding-left: 16px; }
.grid .input { background: #ff0; border-color: #ff0; box-shadow: -1px -1px 0 #ff0; }
.grid .banner { background: #92d050; border-color: #92d050; padding-top: 6px; font-size: 48px; line-height: 48px; }
.grid .picked { position: relative; }
.picked::before { content: ""; position: absolute; inset: -2px; border: 2px solid #217346; outline: 1px solid #fff; outline-offset: -3px; }
.picked::after { content: ""; position: absolute; right: -4px; bottom: -4px; width: 7px; height: 7px; background: #217346; border: solid #fff; border-width: 1px 0 0 1px; }
.phi { font-family: "Open Sans", sans-serif; font-weight: 600; }
.shapes { position: absolute; left: 0; top: 0; }

/* scroll bars */
.vscroll { width: 30px; display: flex; flex-direction: column; padding: 1px 3px 0 2px; }
.vscroll button, .hscroll button { width: 25px; height: 25px; display: grid; place-items: center; background: #fff; border: 1px solid #777; flex: none; }
.vthumb { height: 162px; border: 1px solid #777; border-top-width: 2px; background: #fff; }
.fill { flex: 1; background: #dadada; }
.sheetbar { display: flex; height: 33px; padding-right: 29px; border-bottom: 1px solid #c6c6c6; flex: none; font-size: 20px; color: #444; }
.arrows { width: 115px; padding: 10px 0 0 29px; display: flex; gap: 28px; }
.stab { height: 28px; padding: 0 12px 4px; background: linear-gradient(#999, #999) right 4px / 1px 24px no-repeat; }
.stab.current { height: 30px; background: #fff; color: #217346; border-bottom: 2px solid #217346; border-left: 1px solid #999; }
.add { margin-left: 37px; height: 30px; }
.sheetbar .dots { margin: 8px 18px 0 auto; }
.hscroll { display: flex; align-items: center; width: 38.5%; height: 29px; padding-top: 2px; }
.hthumb { flex: 1; height: 25px; border: 1px solid #777; background: #fff; }
.hrest { width: 40px; height: 25px; background: #dadada; }

/* status bar */
.status { position: relative; display: flex; align-items: center; height: 34px; padding: 0 12px 2px 10px; background: #f3f3f3; flex: none; }
.access { display: flex; align-items: center; gap: 1px; margin-left: 30px; }
.views { display: flex; align-self: stretch; margin-left: auto; }
.views button { width: 60px; display: grid; place-items: center; }
.views .on { background: #c6c6c6; }
.zoom { width: 28px; display: grid; place-items: center; }
.range { appearance: none; width: 148px; height: 18px; margin: 0; background: linear-gradient(#222, #222) center / 100% 2px no-repeat; }
.range::-webkit-slider-thumb { appearance: none; width: 8px; height: 18px; background: #666; }
.percent { width: 58px; text-align: right; }
.mark { position: absolute; right: 13px; top: 2px; font-size: 20px; font-weight: 300; color: rgba(110, 110, 110, .75); }
.meter { position: absolute; left: 0; top: 811px; opacity: .9; }
```

FILE: sheet.js
```js
const widths = [96, 106, 132, 117, 88, 88, 88, 124, 96, 100, 96, 96, 96, 96, 96, 96, 96, 96, 96, 96];
const letters = "ABCDEFGHIJKLMNOPQRSTU".split("");
const heights = [62, 35, 42, 46, 42, 42, 42, 42, 46, 42, 31, 28, 42, 42, 46, 42, 31, 28, 42, 42, 46, 42, 31, 28, 35];

const cosine = 'Cos<span class="phi">φ</span>';
const amps = { A: ["负荷电流（A）", "amp open"], B: ["I", "cur"], D: ["＝", "num"] };
const power = ["负荷的功率（W)", "note open"];
const cells = {
  2: { A: ["1：纯电阻负荷", "head open"] },
  3: { F: ["0", "num input"], I: power },
  4: { ...amps, C: ["0", "num"] },
  5: { F: ["220", "num"], G: ["电源电压（V）", "note open"], H: ["", "picked"] },
  7: { A: ["2：感性负荷", "head open"] },
  8: { G: ["0", "num input"], I: power },
  9: { ...amps, C: ["0", "num"] },
  10: { F: ["220", "num"], G: ["0.85", "num"] },
  11: { F: ["（V）", "shift"], G: [cosine, ""] },
  12: { F: ["电压", "note"], G: ["功率因数", "note open"] },
  13: { A: ["3：单相电动机负荷", "head open"], B: ["", "open"] },
  14: { G: ["0", "num"], I: power },
  15: { ...amps, C: ["0", "num"] },
  16: { F: ["220", "num"], G: ["0.88", "num shift"], H: ["0.89", "num"] },
  17: { F: ["（V）", "shift"], G: ["η", ""], H: [cosine, ""] },
  18: { F: ["电压", "note"], G: ["机械率", "note"], H: ["功率因数", "note"] },
  19: { A: ["4：三相电动机负荷", "head open"], B: ["", "open"] },
  20: { G: ["####", "num input"], I: power },
  21: { ...amps, C: ["21.4604", "num"] },
  22: { E: ["1.73", "num"], F: ["380", "num"], G: ["0.88", "num shift"], H: ["0.89", "num"] },
  23: { E: ["3", ""], F: ["（V）", "shift"], G: ["η", ""], H: [cosine, ""] },
  24: { E: ["平方根", "note"], F: ["电压", "note"], G: ["机械率", "note"], H: ["功率因数", "note"] },
  25: { A: ["5：住宅总负荷电流计算", "head open"], B: ["", "open"] }
};

let html = '<colgroup><col style="width:40px">' + widths.map(w => `<col style="width:${w}px">`).join("") + "<col></colgroup>";
html += '<thead><tr><th class="corner"></th>' + letters.map(l => `<th${l === "H" ? ' class="sel"' : ""}>${l}</th>`).join("") + "</tr></thead><tbody>";
heights.forEach((h, i) => {
  const n = i + 1;
  html += `<tr style="height:${h}px"><th${n === 5 ? ' class="sel"' : ""}>${n}</th>`;
  letters.forEach((l, c) => {
    if (n === 1 && c < 10) {
      if (c === 0) html += '<td class="banner" colspan="10">常用电流计算公式</td>';
      return;
    }
    const [text, cls] = (cells[n] || {})[l] || ["", ""];
    html += `<td${cls ? ` class="${cls}"` : ""}>${text}</td>`;
  });
  html += "</tr>";
});
document.getElementById("grid").innerHTML = html + "</tbody>";
```
